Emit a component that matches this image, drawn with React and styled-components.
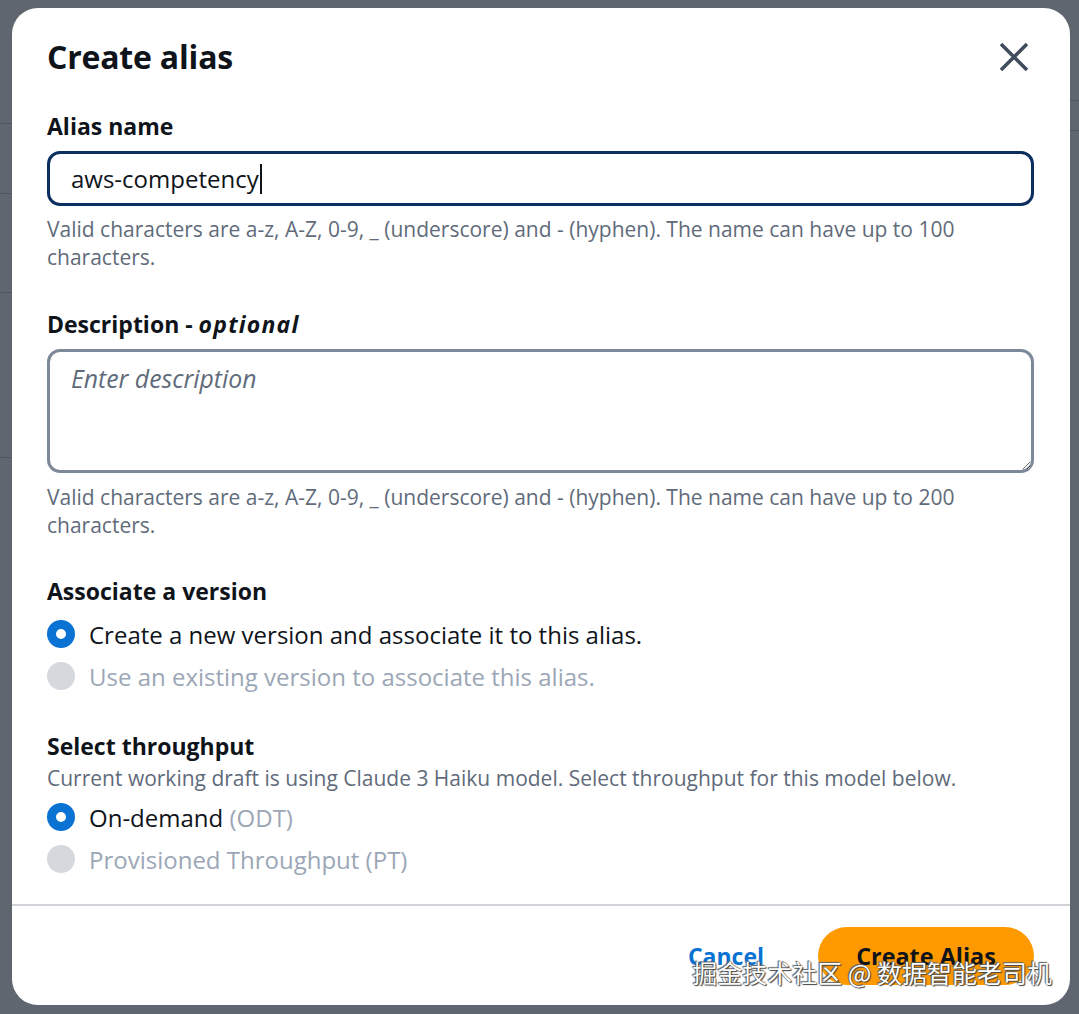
import React from 'react';
import styled, { createGlobalStyle } from 'styled-components';

const GlobalStyle = createGlobalStyle`
  html, body {
    margin: 0;
    padding: 0;
    background: #5f6670;
  }
  body {
    font-family: "Open Sans", "Noto Sans", sans-serif;
  }
`;

const Backdrop = styled.div`
  width: 1079px;
  height: 1014px;
  box-sizing: border-box;
  padding: 8px 9px 9px 12px;
  background-color: #5f6670;
  background-image:
    linear-gradient(#4f555e, #4f555e),
    linear-gradient(#4f555e, #4f555e),
    linear-gradient(#4f555e, #4f555e),
    linear-gradient(#4f555e, #4f555e),
    linear-gradient(#4f555e, #4f555e),
    linear-gradient(#4f555e, #4f555e);
  background-size: 12px 1px, 12px 1px, 12px 1px, 12px 1px, 9px 1px, 9px 1px;
  background-position: 0 123px, 0 193px, 0 292px, 0 457px, 1070px 100px, 1070px 130px;
  background-repeat: no-repeat;
  display: flex;
`;

const Modal = styled.div`
  position: relative;
  flex: 1;
  background: #ffffff;
  border-radius: 26px;
  display: flex;
  flex-direction: column;
  overflow: hidden;
`;

const Header = styled.div`
  display: flex;
  justify-content: space-between;
  align-items: center;
  padding: 29px 36px 0 35px;
`;

const Title = styled.h2`
  margin: 0;
  font-size: 32px;
  line-height: 40px;
  font-weight: 700;
  color: #0f141a;
  letter-spacing: -0.2px;
`;

const CloseButton = styled.button`
  border: none;
  background: none;
  padding: 0;
  margin-right: 5px;
  width: 30px;
  height: 30px;
  display: flex;
  cursor: pointer;
`;

const Body = styled.div`
  padding: 0 36px 0 35px;
  display: flex;
  flex-direction: column;
`;

const Label = styled.div`
  margin-top: ${p => p.$gap}px;
  font-size: 23px;
  line-height: 30px;
  font-weight: 700;
  color: #0f141a;

  em {
    font-style: italic;
    letter-spacing: 1.2px;
  }
`;

const InputBox = styled.div`
  margin-top: 10px;
  height: 55px;
  box-sizing: border-box;
  border: 3px solid #0b2f5f;
  border-radius: 13px;
  padding: 0 21px;
  display: flex;
  align-items: center;
  font-size: 24px;
  color: #0f141a;
`;

const Caret = styled.span`
  display: inline-block;
  width: 2px;
  height: 30px;
  margin-left: 1px;
  background: #0f141a;
`;

const TextArea = styled.textarea`
  margin-top: 10px;
  height: 124px;
  box-sizing: border-box;
  border: 3px solid #7d8998;
  border-radius: 13px;
  padding: 11px 21px;
  font-family: inherit;
  font-size: 24.8px;
  line-height: 30px;
  resize: vertical;
  outline: none;

  &::placeholder {
    font-style: italic;
    color: #5f6b7a;
  }
`;

const Hint = styled.div`
  margin-top: ${p => p.$gap}px;
  font-size: 21px;
  line-height: 28px;
  color: #5f6b7a;
`;

const RadioGroup = styled.div`
  margin-top: ${p => p.$gap}px;
  display: flex;
  flex-direction: column;
`;

const RadioRow = styled.label`
  height: 42px;
  display: flex;
  align-items: center;
  gap: 14px;
  font-size: 24px;
  color: ${p => (p.$disabled ? '#9ba7b6' : '#0f141a')};
`;

const RadioDot = styled.span`
  width: 28px;
  height: 28px;
  box-sizing: border-box;
  border-radius: 50%;
  flex-shrink: 0;
  background: ${p => (p.$checked ? '#ffffff' : '#d5d9de')};
  border: ${p => (p.$checked ? '9px solid #0972d3' : 'none')};
`;

const Muted = styled.span`
  color: #9ba7b6;
`;

const Divider = styled.hr`
  margin: 24px 0 0;
  border: none;
  border-top: 2px solid #cfd2d7;
`;

const Footer = styled.div`
  padding: 21px 36px 19px 35px;
  display: flex;
  justify-content: flex-end;
  align-items: center;
  gap: 54px;
`;

const LinkButton = styled.button`
  border: none;
  background: none;
  padding: 0;
  font-family: inherit;
  font-size: 23px;
  font-weight: 700;
  color: #0972d3;
  cursor: pointer;
`;

const PrimaryButton = styled.button`
  width: 216px;
  height: 58px;
  border: none;
  border-radius: 29px;
  background: #ff9900;
  font-family: inherit;
  font-size: 23.4px;
  font-weight: 700;
  color: #0f141a;
  cursor: pointer;
`;

const Watermark = styled.div`
  position: absolute;
  right: 18px;
  bottom: 17px;
  font-family: "Noto Sans CJK SC", "Noto Sans", sans-serif;
  font-size: 25px;
  line-height: 32px;
  color: #ffffff;
  white-space: nowrap;
  pointer-events: none;
  text-shadow: 0 0 1px #333, 1px 1px 1px #444, -1px -1px 1px #666;
`;

const CloseIcon = () => (
  <svg width="30" height="30" viewBox="0 0 30 30" fill="none">
    <path d="M2 2 L28 28 M28 2 L2 28" stroke="#414d5c" strokeWidth="3.6" strokeLinecap="butt" />
  </svg>
);

const Radio = ({ checked, disabled, children }) => (
  <RadioRow $disabled={disabled}>
    <RadioDot $checked={checked} />
    <span>{children}</span>
  </RadioRow>
);

export default function App() {
  return (
    <>
      <GlobalStyle />
      <Backdrop>
        <Modal>
          <Header>
            <Title>Create alias</Title>
            <CloseButton aria-label="Close">
              <CloseIcon />
            </CloseButton>
          </Header>

          <Body>
            <Label $gap={34}>Alias name</Label>
            <InputBox>
              aws-competency
              <Caret />
            </InputBox>
            <Hint $gap={9}>
              Valid characters are a-z, A-Z, 0-9, _ (underscore) and - (hyphen). The name can have up to 100 characters.
            </Hint>

            <Label $gap={38}>
              Description - <em>optional</em>
            </Label>
            <TextArea placeholder="Enter description" readOnly />
            <Hint $gap={10}>
              Valid characters are a-z, A-Z, 0-9, _ (underscore) and - (hyphen). The name can have up to 200 characters.
            </Hint>

            <Label $gap={37}>Associate a version</Label>
            <RadioGroup $gap={7}>
              <Radio checked>Create a new version and associate it to this alias.</Radio>
              <Radio disabled>Use an existing version to associate this alias.</Radio>
            </RadioGroup>

            <Label $gap={34}>Select throughput</Label>
            <Hint $gap={3}>
              Current working draft is using Claude 3 Haiku model. Select throughput for this model below.
            </Hint>
            <RadioGroup $gap={4}>
              <Radio checked>
                On-demand <Muted>(ODT)</Muted>
              </Radio>
              <Radio disabled>Provisioned Throughput (PT)</Radio>
            </RadioGroup>
          </Body>

          <Divider />

          <Footer>
            <LinkButton>Cancel</LinkButton>
            <PrimaryButton>Create Alias</PrimaryButton>
          </Footer>

          <Watermark>掘金技术社区 @ 数据智能老司机</Watermark>
        </Modal>
      </Backdrop>
    </>
  );
}
